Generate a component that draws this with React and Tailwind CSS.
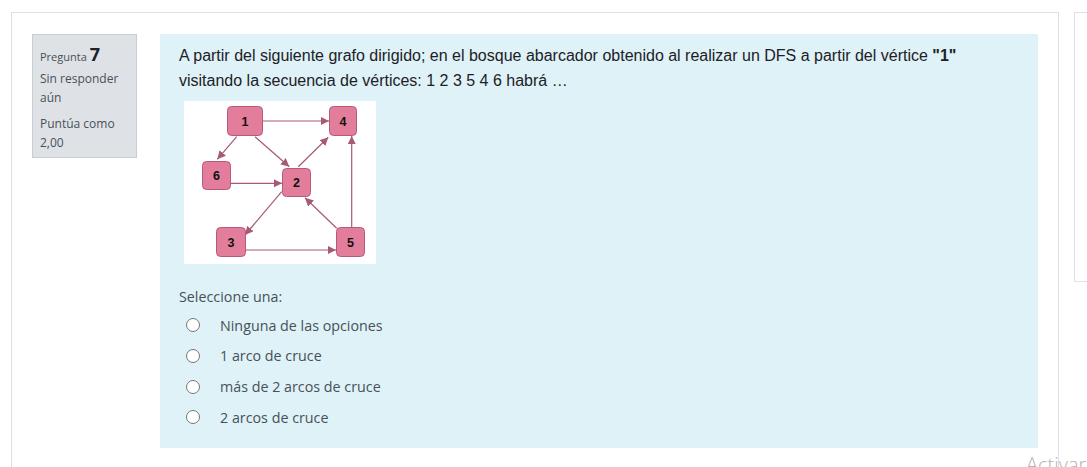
import React from 'react'

const nodes = [
  { id: '1', x: 43, y: 5, w: 36, h: 30 },
  { id: '4', x: 145, y: 5, w: 28, h: 30 },
  { id: '6', x: 18, y: 60, w: 29, h: 29 },
  { id: '2', x: 98, y: 67, w: 29, h: 29 },
  { id: '3', x: 32, y: 126, w: 30, h: 30 },
  { id: '5', x: 152, y: 126, w: 29, h: 30 },
]

const edges = [
  [79, 20, 145, 20],
  [52.7, 35.7, 33.3, 58.3],
  [71, 35.7, 105.3, 65.7],
  [47, 82.3, 98, 82.3],
  [114.3, 65.7, 144.3, 36.3],
  [97.7, 90.7, 61, 134],
  [62, 149, 152, 149],
  [152.7, 127.3, 121, 96.7],
  [167.7, 126, 167.7, 35],
]

function Graph() {
  return (
    <svg width="192" height="163" viewBox="0 0 192 163" className="block bg-white">
      <defs>
        <marker id="arr" viewBox="0 0 10 10" refX="10" refY="5" markerWidth="7" markerHeight="7" orient="auto">
          <path d="M0 0 L10 5 L0 10 z" fill="#a65a73" />
        </marker>
      </defs>
      {edges.map(([x1, y1, x2, y2], i) => (
        <line key={i} x1={x1} y1={y1} x2={x2} y2={y2} stroke="#a65a73" strokeWidth="1.2" markerEnd="url(#arr)" />
      ))}
      {nodes.map((n) => (
        <g key={n.id}>
          <rect x={n.x + 0.5} y={n.y + 0.5} width={n.w - 1} height={n.h - 1} rx="4" fill="#e27d9b" stroke="#b8587a" />
          <text
            x={n.x + n.w / 2}
            y={n.y + n.h / 2 + 4.5}
            textAnchor="middle"
            fontSize="12.5"
            fontWeight="700"
            fontFamily="'Liberation Sans', Arial, sans-serif"
            fill="#111"
          >
            {n.id}
          </text>
        </g>
      ))}
    </svg>
  )
}

const options = ['Ninguna de las opciones', '1 arco de cruce', 'más de 2 arcos de cruce', '2 arcos de cruce']

function App() {
  return (
    <div className="relative w-[1087px] h-[467px] overflow-hidden bg-white">
      <div className="flex items-start pt-[12px] pl-[11px]">
        {/* Question card */}
        <div className="w-[1048px] h-[480px] shrink-0 border border-[#dee2e6] pt-[21px] pl-[20px] flex items-start">
          {/* Info */}
          <div className="w-[105px] h-[124px] shrink-0 bg-[#dee2e6] border border-[#c9ced4] px-[7px] pt-[6px] text-[#495057] font-['Open_Sans',sans-serif]">
            <div className="flex items-baseline gap-[3px] leading-[26px]">
              <span className="text-[11px]">Pregunta</span>
              <span className="text-[18px] font-bold text-[#1d2125]">7</span>
            </div>
            <div className="text-[12px] leading-[19px] mt-[-1px]">Sin responder aún</div>
            <div className="text-[12px] leading-[19px] mt-[7px]">Puntúa como 2,00</div>
          </div>

          {/* Content */}
          <div className="ml-[23px] w-[878px] shrink-0 bg-[#def2f8] pl-[19px] pt-[9px] pb-[15px]">
            <p className="font-['Liberation_Sans',Arial,sans-serif] text-[16px] leading-[25px] text-[#1d2125]">
              A partir del siguiente grafo dirigido; en el bosque abarcador obtenido al realizar un DFS a partir del vértice <b>"1"</b>
              <br />
              visitando la secuencia de vértices: 1 2 3 5 4 6 habrá …
            </p>
            <div className="mt-[8px] ml-[5px]">
              <Graph />
            </div>
            <div className="mt-[22px] font-['Open_Sans',sans-serif] text-[14.3px] text-[#495057]">
              <div className="leading-[22px]">Seleccione una:</div>
              <div className="mt-[2px] flex flex-col">
                {options.map((o) => (
                  <label key={o} className="flex items-center h-[30.7px]">
                    <span className="ml-[7px] w-[14px] h-[14px] rounded-full border border-[#767676] bg-white shrink-0" />
                    <span className="ml-[20px]">{o}</span>
                  </label>
                ))}
              </div>
            </div>
          </div>
        </div>

        {/* Side card */}
        <div className="ml-[15px] w-[200px] h-[270px] shrink-0 border border-[#dee2e6]" />
      </div>

      <div className="absolute left-[1026px] top-[451px] text-[20px] leading-[28px] text-[#b4b4b4] font-['Open_Sans',sans-serif] font-light">
        Activar
      </div>
    </div>
  )
}

export default App
